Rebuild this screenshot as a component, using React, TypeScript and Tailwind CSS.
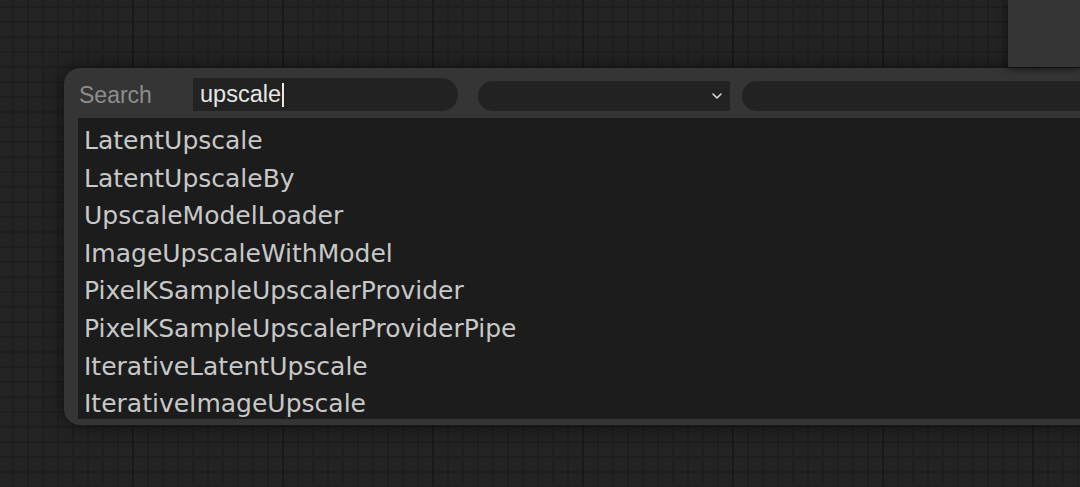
import { ChevronDown } from "lucide-react";

const results = [
  "LatentUpscale",
  "LatentUpscaleBy",
  "UpscaleModelLoader",
  "ImageUpscaleWithModel",
  "PixelKSampleUpscalerProvider",
  "PixelKSampleUpscalerProviderPipe",
  "IterativeLatentUpscale",
  "IterativeImageUpscale",
];

export default function App() {
  return (
    <div className="relative h-[487px] w-[1080px] overflow-hidden bg-[#232323] [background-image:linear-gradient(to_right,#191919_2px,transparent_2px),linear-gradient(to_right,#1e1e1e_2px,transparent_2px),linear-gradient(to_bottom,#1e1e1e_2px,transparent_2px)] [background-size:150px_150px,15px_15px,15px_15px] [background-position:132px_0,12px_0,0_6px]">
      {/* node peeking in at the top right of the canvas */}
      <div className="absolute right-0 top-0 h-[67px] w-[72px] bg-[#353535] shadow-[0_2px_8px_rgba(0,0,0,0.6)]" />

      <div className="pl-[64px] pt-[68px]">
        <div className="w-[1120px] rounded-l-[16px] bg-[#353535] pb-[6px] pl-[14px] pt-[10px] shadow-[0_0_18px_rgba(0,0,0,0.55)]">
          {/* search row */}
          <div className="flex h-[33px] items-end">
            <label className="w-[115px] self-center pl-px pt-px font-['Liberation_Sans',Arial,sans-serif] text-[23px] text-[#8d8d8d]">
              Search
            </label>
            <div className="flex h-[33px] w-[265px] items-center rounded-r-full bg-[#222222] pl-[7px] font-['Liberation_Sans',Arial,sans-serif] text-[23.5px] text-[#e6e6e6]">
              upscale
              <span className="ml-px h-[24px] w-[1.5px] bg-[#e6e6e6]" />
            </div>
            <div className="ml-[20px] flex h-[30px] w-[252px] items-center justify-end rounded-l-full bg-[#222222] pr-[5px]">
              <ChevronDown className="h-[16px] w-[16px] text-[#e0e0e0]" strokeWidth={2.2} />
            </div>
            <div className="ml-[12px] h-[30px] flex-1 rounded-l-full bg-[#222222]" />
          </div>

          {/* result list */}
          <ul className="mt-[7px] h-[301px] overflow-hidden bg-[#1c1c1c] pl-[6px] pt-[4px] font-['DejaVu_Sans',Verdana,sans-serif] text-[25px] leading-[37.6px] text-[#c8c8c8]">
            {results.map((r) => (
              <li key={r}>{r}</li>
            ))}
          </ul>
        </div>
      </div>
    </div>
  );
}
